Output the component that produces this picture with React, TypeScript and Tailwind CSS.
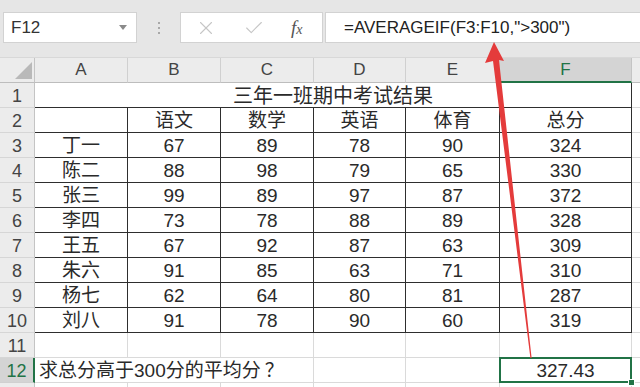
import React from 'react';
import { X, Check } from 'lucide-react';

const cols = ['A', 'B', 'C', 'D', 'E', 'F'];

const subjects = ['语文', '数学', '英语', '体育', '总分'];

const rows = [
  ['丁一', '67', '89', '78', '90', '324'],
  ['陈二', '88', '98', '79', '65', '330'],
  ['张三', '99', '89', '97', '87', '372'],
  ['李四', '73', '78', '88', '89', '328'],
  ['王五', '67', '92', '87', '63', '309'],
  ['朱六', '91', '85', '63', '71', '310'],
  ['杨七', '62', '64', '80', '81', '287'],
  ['刘八', '91', '78', '90', '60', '319'],
];

const RowNum: React.FC<{ n?: number; active?: boolean }> = ({ n, active }) =>
  active ? (
    <div className="flex items-center justify-center pt-[2px] bg-[#d4d4d4] border-r-2 border-b border-r-[#217346] border-b-[#d0d0d0] text-[18px] text-[#217346]">
      {n}
    </div>
  ) : (
    <div className="flex items-center justify-center pt-[2px] bg-[#ececec] border-r border-b border-r-[#c4c4c4] border-b-[#d6d6d6] text-[18px] text-[#444]">
      {n}
    </div>
  );

const cell = 'flex items-center justify-center pt-[2px] border-r border-b border-[#2e2e2e] text-[19px] text-[#2a2a2a]';
const light = 'border-r border-b border-[#dadada]';
const gcol = 'border-b border-[#dadada]';

const App: React.FC = () => {
  return (
    <div className="relative w-[640px] h-[387px] overflow-hidden bg-white font-['Liberation_Sans','Noto_Sans_CJK_SC',sans-serif]">
      {/* name box + formula bar */}
      <div className="h-[57px] bg-[#e6e6e6] flex items-start pt-[12px] pl-[3px]">
        <div className="w-[134px] h-[31px] bg-white border border-[#d2d2d2] flex items-center justify-between pl-[7px] pr-[9px]">
          <span className="text-[17px] text-[#333]">F12</span>
          <svg width="8" height="5" viewBox="0 0 8 5">
            <polygon points="0,0 8,0 4,5" fill="#8a8a8a" />
          </svg>
        </div>
        <div className="w-[43px] h-[31px] flex flex-col items-center justify-center gap-[3px]">
          <div className="w-[2px] h-[2px] bg-[#a8a8a8]" />
          <div className="w-[2px] h-[2px] bg-[#a8a8a8]" />
          <div className="w-[2px] h-[2px] bg-[#a8a8a8]" />
        </div>
        <div className="w-[143px] h-[31px] bg-white border border-[#d2d2d2] flex items-center pl-[14px] gap-[26px]">
          <X size={22} strokeWidth={1.2} className="text-[#c6c6c6]" />
          <Check size={22} strokeWidth={1.2} className="text-[#c6c6c6]" />
          <span className="font-['Liberation_Serif',serif] italic text-[19px] text-[#555] leading-none">
            f<span className="text-[14px]">x</span>
          </span>
        </div>
        <div className="flex-1 h-[31px] ml-[2px] bg-white border-y border-l border-[#d2d2d2] flex items-center pl-[18px]">
          <span className="text-[17px] text-[#222] whitespace-nowrap">=AVERAGEIF(F3:F10,"&gt;300")</span>
        </div>
      </div>

      {/* sheet */}
      <div className="grid grid-cols-[35px_93px_93px_93px_92px_94px_132px_1fr] auto-rows-[25px] border-t border-[#d8d8d8]">
        {/* column headers */}
        <div className="bg-[#ececec] border-r border-b border-r-[#c4c4c4] border-b-[#bdbdbd] relative">
          <svg className="absolute left-0 top-0" width="35" height="25" viewBox="0 0 35 25">
            <polygon points="32,4 32,21 15,21" fill="#b9b9b9" />
          </svg>
        </div>
        {cols.map((c) =>
          c === 'F' ? (
            <div key={c} className="flex items-center justify-center bg-[#d4d4d4] border-r border-b-2 border-r-[#c4c4c4] border-b-[#217346] text-[17px] text-[#217346]">
              {c}
            </div>
          ) : (
            <div key={c} className="flex items-center justify-center bg-[#ececec] border-r border-b border-r-[#d0d0d0] border-b-[#bdbdbd] text-[17px] text-[#444]">
              {c}
            </div>
          )
        )}
        <div className="bg-[#ececec] border-b border-[#bdbdbd]" />

        {/* row 1: title */}
        <RowNum n={1} />
        <div className="col-span-6 flex items-center justify-center pt-[2px] border-r border-b border-[#2e2e2e] text-[20px] text-[#2a2a2a]">
          三年一班期中考试结果
        </div>
        <div className={gcol} />

        {/* row 2: subjects */}
        <RowNum n={2} />
        <div className={cell} />
        {subjects.map((s) => (
          <div key={s} className={cell}>
            {s}
          </div>
        ))}
        <div className={gcol} />

        {/* rows 3-10 */}
        {rows.map((r, i) => (
          <React.Fragment key={i}>
            <RowNum n={i + 3} />
            {r.map((v, j) => (
              <div key={j} className={cell}>
                {v}
              </div>
            ))}
            <div className={gcol} />
          </React.Fragment>
        ))}

        {/* row 11 */}
        <RowNum n={11} />
        {cols.map((c) => (
          <div key={c} className={light} />
        ))}
        <div className={gcol} />

        {/* row 12 */}
        <RowNum n={12} active />
        <div className="col-span-3 flex items-center pl-[4px] pt-[2px] border-r border-b border-[#dadada] text-[19px] text-[#2a2a2a] whitespace-nowrap">
          求总分高于300分的平均分<span className="ml-[4px]">？</span>
        </div>
        <div className={light} />
        <div className={light} />
        <div className="relative flex items-center justify-center pt-[2px] border-r border-b border-[#dadada] text-[19px] text-[#2a2a2a]">
          327.43
          <div className="absolute inset-[-1px] border-2 border-[#217346]" />
          <div className="absolute right-[-4px] bottom-[-4px] w-[7px] h-[7px] bg-[#217346] border border-white" />
        </div>
        <div className={gcol} />

        {/* row 13 (cut off, number hidden below the edge) */}
        <RowNum />
        {cols.map((c) => (
          <div key={c} className={light} />
        ))}
        <div className={gcol} />
      </div>

      {/* red annotation arrow */}
      <svg className="absolute left-0 top-0 pointer-events-none" width="640" height="387" viewBox="0 0 640 387">
        <polygon
          points="494,42 504,61 499,60 531.6,358 530.4,358 493,61 485,63"
          fill="#e43b3b"
        />
      </svg>
    </div>
  );
};

export default App;
